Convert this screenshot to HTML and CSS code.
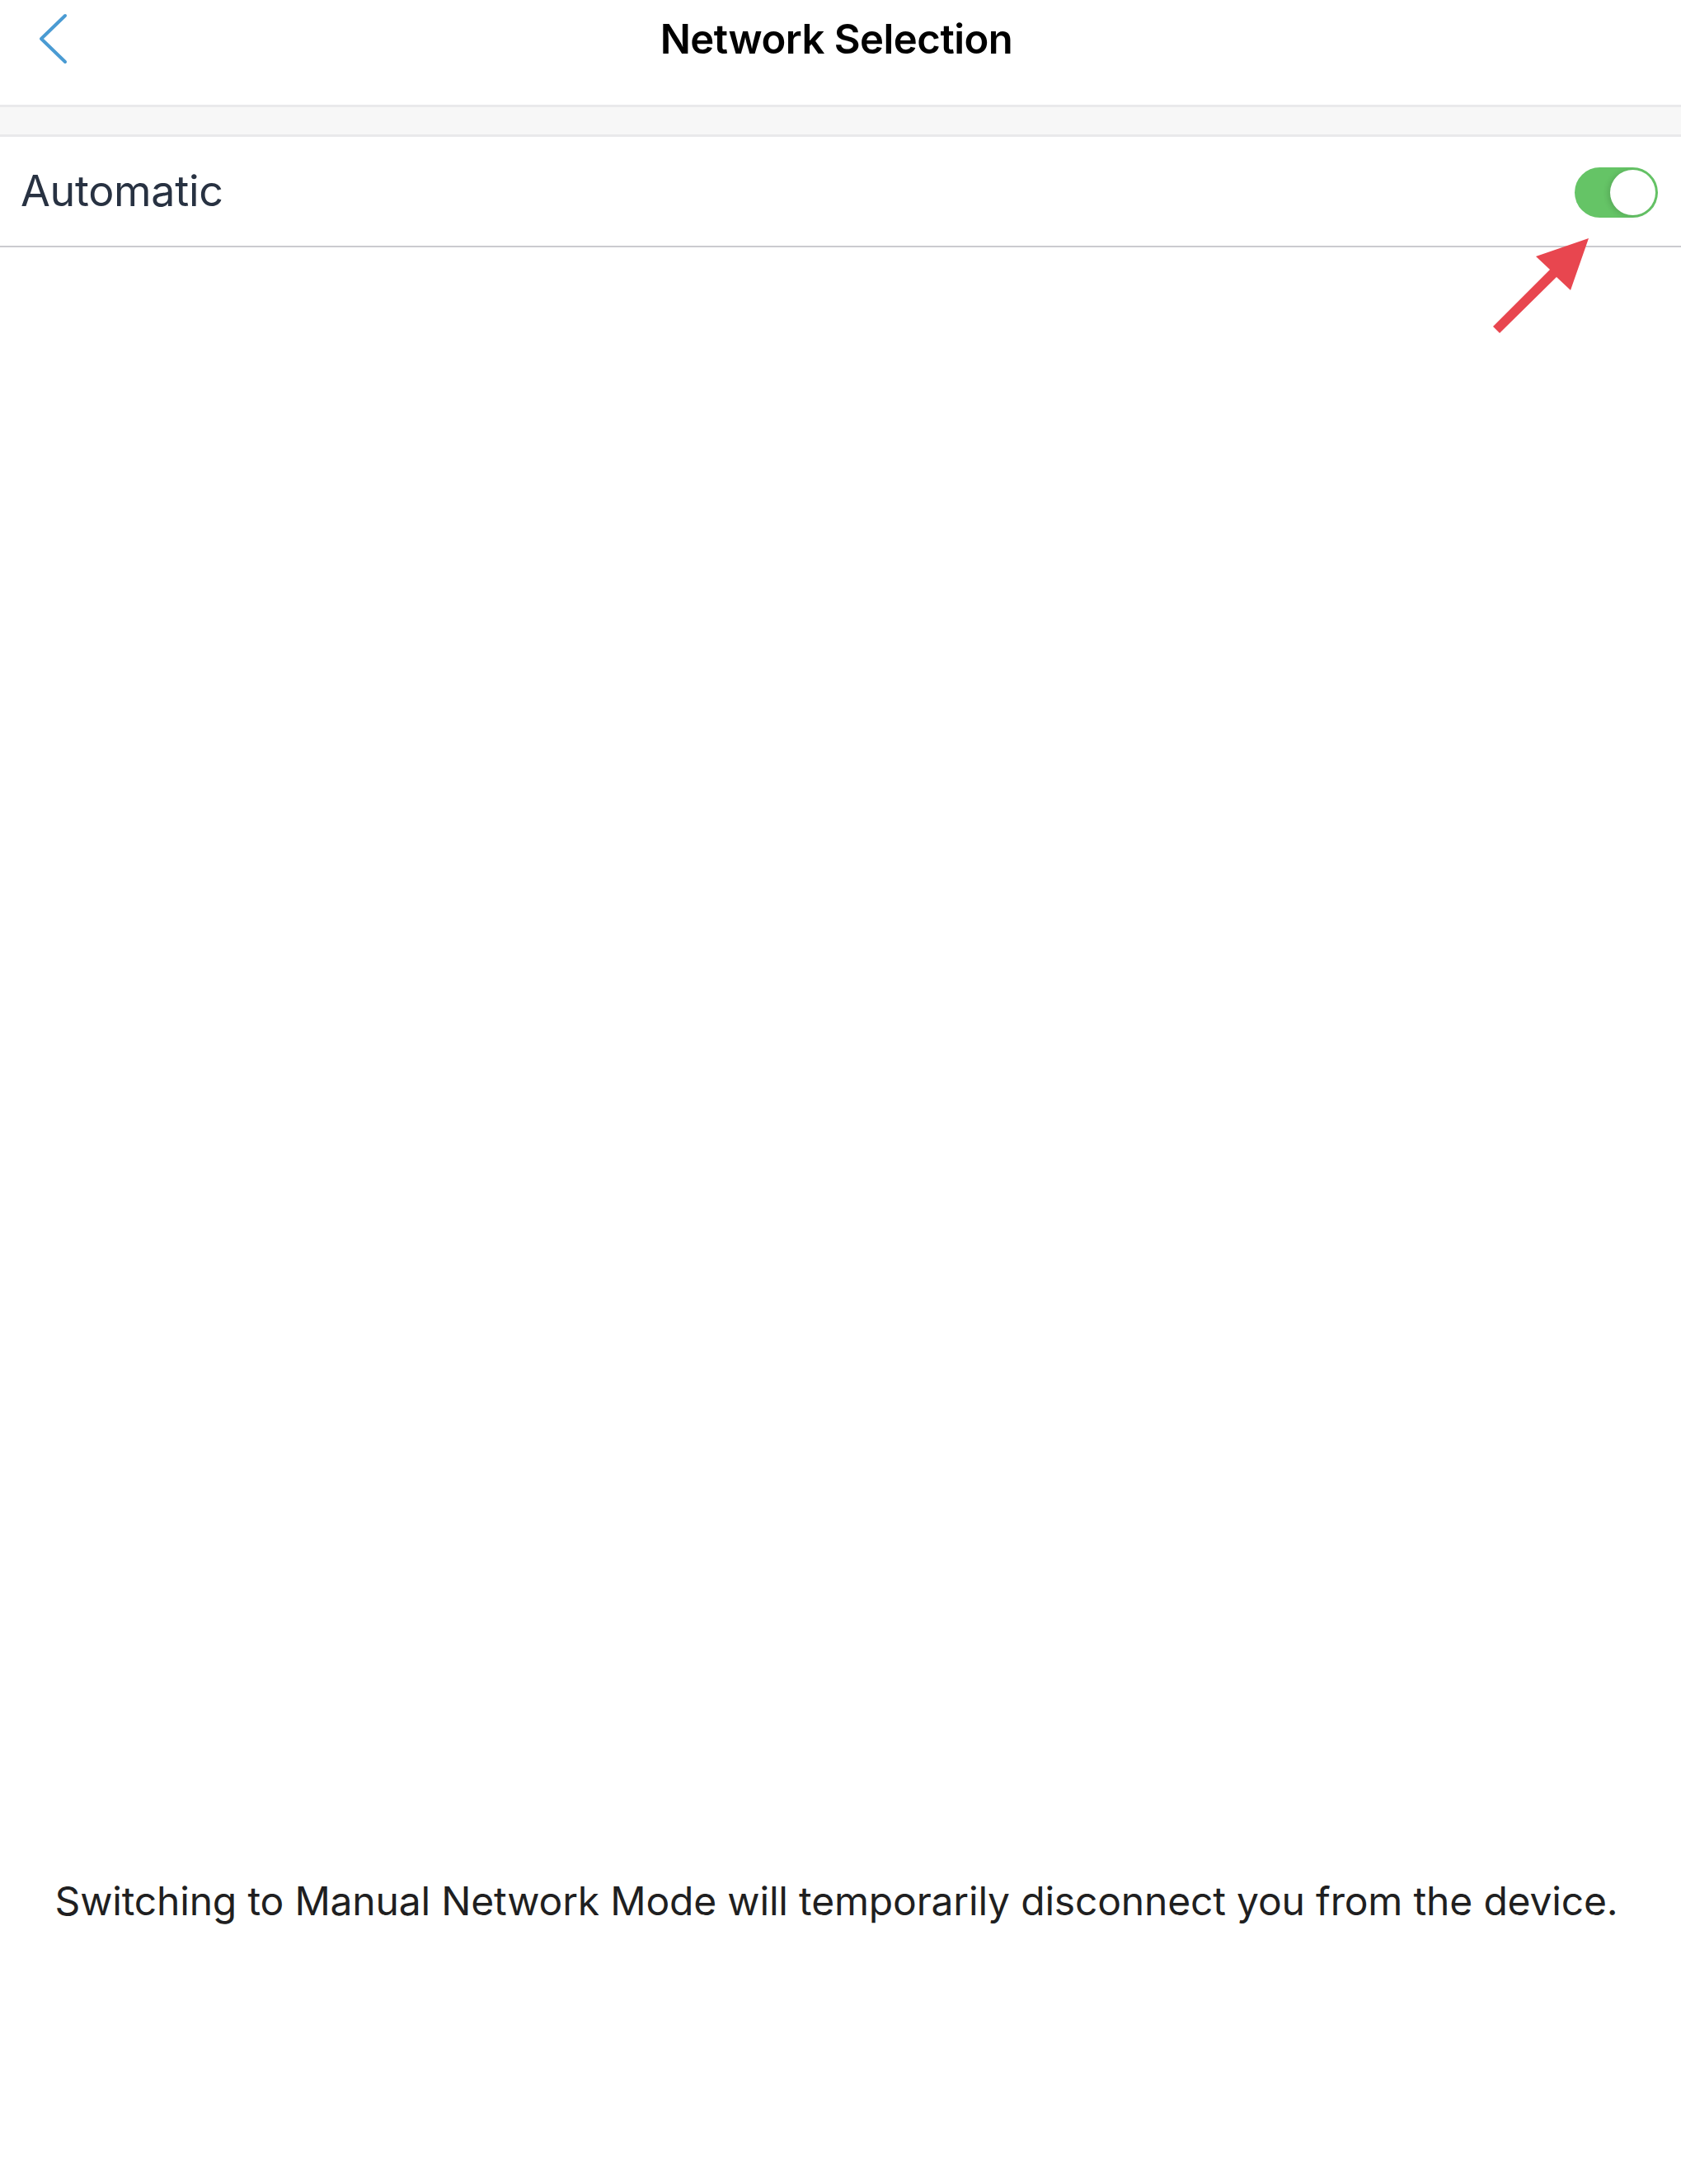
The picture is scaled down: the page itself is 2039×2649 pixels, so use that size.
FILE: index.html
```html
<!DOCTYPE html>
<html lang="en">
<head>
<meta charset="utf-8">
<title>Network Selection</title>
<link rel="stylesheet" href="styles.css">
</head>
<body>
<div class="screen">
  <header class="navbar">
    <div class="nav-left">
      <svg class="back" width="40" height="64" viewBox="0 0 40 64" aria-label="Back">
        <path d="M34 4 L5 32 L34 60" fill="none" stroke="#4a9bd3" stroke-width="4" stroke-linecap="round" stroke-linejoin="round"/>
      </svg>
    </div>
    <h1 class="title">Network Selection</h1>
    <div class="nav-right"></div>
  </header>
  <div class="group-gap"></div>
  <div class="row">
    <span class="row-label">Automatic</span>
    <span class="toggle on"><span class="knob"></span></span>
  </div>
  <main class="content"></main>
  <p class="note">Switching to Manual Network Mode will temporarily disconnect you from the device.</p>
  <svg class="annot-arrow" width="140" height="130" viewBox="0 0 140 130">
    <polygon points="11,116 80,47 63,31 127,9 105,72 88,56 19,124" fill="#e8464f"/>
  </svg>
</div>
</body>
</html>
```
FILE: styles.css
```css
* { box-sizing: border-box; }
html, body { margin: 0; padding: 0; background: #ffffff; }
body { font-family: "Inter", "Noto Sans", "Liberation Sans", sans-serif; }

.screen {
  position: relative;
  min-height: 100vh;
  display: flex;
  flex-direction: column;
}

.navbar {
  height: 127px;
  padding-bottom: 33px;
  padding-right: 10px;
  display: grid;
  grid-template-columns: 1fr auto 1fr;
  align-items: center;
}
.nav-left { padding-left: 45px; display: flex; align-items: center; }
.back { display: block; }
.title {
  margin: 0;
  font-size: 49px;
  line-height: 1;
  font-weight: 600;
  color: #000;
  letter-spacing: -0.5px;
}

.group-gap {
  height: 39px;
  background: #f7f7f7;
  border-top: 3px solid #e9e9eb;
  border-bottom: 3px solid #e9e9eb;
}

.row {
  height: 134px;
  border-bottom: 2px solid #cbcbcf;
  display: flex;
  align-items: center;
  justify-content: space-between;
  padding: 0 28px 0 25px;
}
.row-label {
  font-size: 52px;
  line-height: 1;
  color: #283242;
  letter-spacing: -0.3px;
}

.toggle {
  position: relative;
  width: 101px;
  height: 61px;
  border-radius: 31px;
  background: #65c466;
  display: block;
  margin-top: 2px;
}
.knob {
  position: absolute;
  top: 3px;
  right: 3px;
  width: 55px;
  height: 55px;
  border-radius: 50%;
  background: #fff;
  box-shadow: -3px 1px 6px rgba(0, 0, 0, 0.12);
}

.content { flex: 1; }

.note {
  margin: 0;
  padding: 0 10px 313px 0;
  text-align: center;
  font-size: 48px;
  line-height: 60px;
  color: #1f1f21;
  letter-spacing: -0.18px;
}

.annot-arrow {
  position: absolute;
  left: 1800px;
  top: 280px;
}
```
